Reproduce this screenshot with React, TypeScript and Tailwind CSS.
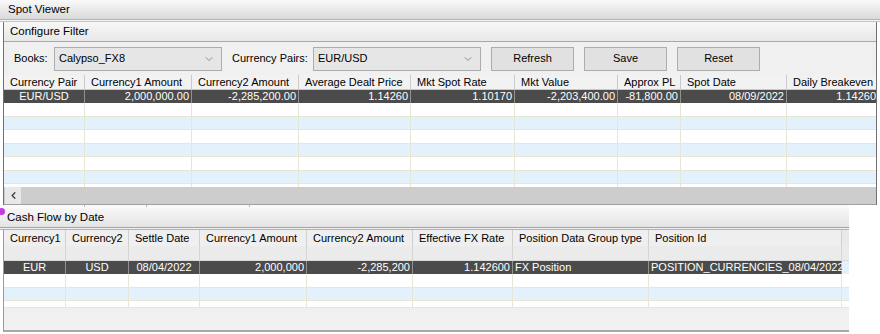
import { ChevronDown, ChevronLeft } from 'lucide-react'

const TOP_COLS = [
  { name: 'Currency Pair',       w: 81,  align: 'text-center' },
  { name: 'Currency1 Amount',    w: 107, align: 'text-right' },
  { name: 'Currency2 Amount',    w: 107, align: 'text-right' },
  { name: 'Average Dealt Price', w: 112, align: 'text-right' },
  { name: 'Mkt Spot Rate',       w: 104, align: 'text-right' },
  { name: 'Mkt Value',           w: 103, align: 'text-right' },
  { name: 'Approx PL',           w: 63,  align: 'text-right' },
  { name: 'Spot Date',           w: 106, align: 'text-right' },
  { name: 'Daily Breakeven',     w: 92,  align: 'text-right' },
]

const TOP_ROW = ['EUR/USD', '2,000,000.00', '-2,285,200.00', '1.14260', '1.10170', '-2,203,400.00', '-81,800.00', '08/09/2022', '1.14260']

const BOTTOM_COLS = [
  { name: 'Currency1',               w: 62,  align: 'text-center' },
  { name: 'Currency2',               w: 63,  align: 'text-center' },
  { name: 'Settle Date',             w: 71,  align: 'text-center' },
  { name: 'Currency1 Amount',        w: 107, align: 'text-right' },
  { name: 'Currency2 Amount',        w: 106, align: 'text-right' },
  { name: 'Effective FX Rate',       w: 100, align: 'text-right' },
  { name: 'Position Data Group type', w: 136, align: 'text-left' },
  { name: 'Position Id',             w: 193, align: 'text-left' },
]

const BOTTOM_ROW = ['EUR', 'USD', '08/04/2022', '2,000,000', '-2,285,200', '1.142600', 'FX Position', 'POSITION_CURRENCIES_08/04/2022']

const FONT = "font-['Liberation_Sans',Arial,sans-serif]"

export default function App() {
  return (
    <div className={`w-[880px] h-[334px] overflow-hidden bg-white text-[11px] text-black ${FONT}`}>
      {/* window title */}
      <div className="h-[20px] flex items-center px-[8px] text-[11.5px] bg-gradient-to-b from-[#fafafa] to-[#d9d9d9] border-b border-[#b4b4b4]">
        Spot Viewer
      </div>
      <div className="h-[2px] bg-[#f4f4f4] border-b border-[#c4c4c4]" />

      {/* top panel */}
      <div className="ml-[3px] w-[874px] border-l border-r border-[#707070] bg-[#f0f0f0]">
        <div className="h-[20px] flex items-center px-[6px] text-[11.5px] bg-gradient-to-b from-[#f7f7f7] to-[#e8e8e8] border-b border-[#a8a8a8]">
          Configure Filter
        </div>

        <div className="h-[33px] flex items-center whitespace-nowrap">
          <span className="ml-[10px] w-[40px]">Books:</span>
          <Select value="Calypso_FX8" w="w-[168px]" />
          <span className="ml-[10px] w-[81px]">Currency Pairs:</span>
          <Select value="EUR/USD" w="w-[168px]" />
          <Btn label="Refresh" cls="ml-[10px]" />
          <Btn label="Save" cls="ml-[10px]" />
          <Btn label="Reset" cls="ml-[10px]" />
        </div>

        {/* spot table */}
        <div className="overflow-hidden bg-white">
          <div className="flex h-[15px] bg-[#f2f2f2] border-b border-[#c8c8c8] w-max">
            {TOP_COLS.map(c => (
              <div key={c.name} style={{ width: c.w }}
                className="shrink-0 pl-[6px] leading-[15px] whitespace-nowrap border-r border-[#c9c9c9]">
                {c.name}
              </div>
            ))}
          </div>
          <div className="h-[97px] overflow-hidden">
            <div className="flex h-[13px] bg-[#4b4b4b] text-white w-max">
              {TOP_COLS.map((c, i) => (
                <div key={c.name} style={{ width: c.w }}
                  className={`shrink-0 px-[2px] leading-[13px] whitespace-nowrap border-r border-[#909090] ${c.align}`}>
                  {TOP_ROW[i]}
                </div>
              ))}
            </div>
            {[0, 1, 2, 3, 4, 5, 6].map(r => (
              <div key={r} className={`flex h-[13.5px] border-b border-[#e6e6d6] w-max ${r % 2 ? 'bg-[#e3f1fc]' : 'bg-white'}`}>
                {TOP_COLS.map(c => (
                  <div key={c.name} style={{ width: c.w }} className="shrink-0 border-r border-[#e6e6d6]" />
                ))}
              </div>
            ))}
          </div>
          <div className="h-[18px] flex bg-[#cdcdcd] border-b border-[#a0a0a0]">
            <div className="w-[16px] ml-[1px] flex items-center justify-center bg-[#e8e8e8]">
              <ChevronLeft size={11} strokeWidth={3} className="text-[#404040]" />
            </div>
          </div>
        </div>
      </div>

      {/* splitter between panels */}
      <div className="h-[3px] w-[849px] bg-[#fafafa] flex">
        <div className="ml-[84px] w-[1px] h-[2px] bg-[#b8b8b8]" />
        <div className="ml-[61px] w-[1px] h-[2px] bg-[#b8b8b8]" />
        <div className="ml-[102px] w-[1px] h-[2px] bg-[#b8b8b8]" />
      </div>

      {/* cash flow panel */}
      <div className="relative w-[849px]">
        <div className="absolute -left-[2px] top-[0px] w-[7px] h-[7px] rounded-full bg-[#c53ae0]" />
        <div className="h-[20px] flex items-center pl-[7px] text-[11.5px] bg-gradient-to-b from-[#f7f7f7] to-[#e4e4e4] border-b border-[#a4a4a4]">
          Cash Flow by Date
        </div>
        <div className="h-[1px] bg-[#f2f2f2] border-b border-[#b0b0b0] box-content" />
        <div className="ml-[3px] border-l border-[#9a9a9a] bg-[#f0f0f0] border-b-2 border-b-[#a8a8a8]">
          <div className="flex h-[16px] bg-[#efefef]">
            {BOTTOM_COLS.map(c => (
              <div key={c.name} style={{ width: c.w }}
                className="shrink-0 pl-[6px] leading-[16px] whitespace-nowrap border-r border-[#cfcfcf]">
                {c.name}
              </div>
            ))}
            <div className="flex-1 bg-[#e9e9e9]" />
          </div>
          <div className="flex h-[15px] bg-[#ebebeb] border-b border-[#dadada]">
            {BOTTOM_COLS.map(c => (
              <div key={c.name} style={{ width: c.w }} className="shrink-0 border-r border-[#d6d6d6]" />
            ))}
            <div className="flex-1" />
          </div>
          <div className="flex h-[13px] text-white">
            {BOTTOM_COLS.map((c, i) => (
              <div key={c.name} style={{ width: c.w }}
                className={`shrink-0 px-[2px] leading-[13px] whitespace-nowrap bg-[#4b4b4b] border-r border-[#909090] ${c.align}`}>
                {BOTTOM_ROW[i]}
              </div>
            ))}
            <div className="flex-1 bg-[#e3f1fc]" />
          </div>
          {[0, 1, 2].map(r => (
            <div key={r} className={`flex border-b border-[#e6e6d6] ${r === 2 ? 'h-[7px]' : 'h-[13.5px]'} ${r % 2 ? 'bg-[#e3f1fc]' : 'bg-white'}`}>
              {BOTTOM_COLS.map(c => (
                <div key={c.name} style={{ width: c.w }} className="shrink-0 border-r border-[#e6e6d6]" />
              ))}
              <div className="flex-1" />
            </div>
          ))}
          <div className="h-[22px]" />
        </div>
      </div>
    </div>
  )
}

function Select({ value, w }: { value: string; w: string }) {
  return (
    <div className={`${w} h-[24px] flex items-center justify-between pl-[4px] pr-[6px] bg-[#e6e6e6] border border-[#adadad]`}>
      <span>{value}</span>
      <ChevronDown size={12} strokeWidth={1.5} className="text-[#707070]" />
    </div>
  )
}

function Btn({ label, cls }: { label: string; cls: string }) {
  return (
    <div className={`${cls} w-[83px] h-[24px] flex items-center justify-center bg-[#e1e1e1] border border-[#adadad]`}>
      {label}
    </div>
  )
}
